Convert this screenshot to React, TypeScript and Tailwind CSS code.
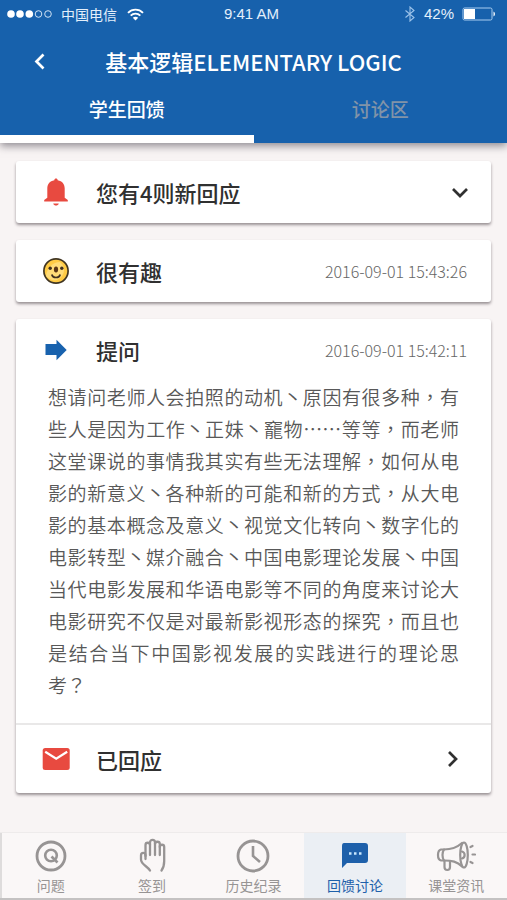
import type { ReactNode } from "react";

const feedback =
  "想请问老师人会拍照的动机丶原因有很多种，有些人是因为工作丶正妹丶竉物……等等，而老师这堂课说的事情我其实有些无法理解，如何从电影的新意义丶各种新的可能和新的方式，从大电影的基本概念及意义丶视觉文化转向丶数字化的电影转型丶媒介融合丶中国电影理论发展丶中国当代电影发展和华语电影等不同的角度来讨论大电影研究不仅是对最新影视形态的探究，而且也是结合当下中国影视发展的实践进行的理论思考？";

function StatusBar() {
  return (
    <div className="grid h-7 grid-cols-3 items-center pl-[7px] pr-[11px] text-[15px] text-[#e3effb]">
      <div className="flex items-center">
        <svg width="46" height="10" viewBox="0 0 46 10" fill="none" stroke="currentColor" aria-hidden="true">
          <circle cx="4" cy="5" r="3.8" fill="white" stroke="none" />
          <circle cx="13" cy="5" r="3.8" fill="white" stroke="none" />
          <circle cx="22.300" cy="5" r="3.8" fill="white" stroke="none" />
          <circle cx="31.500" cy="5" r="3.300" strokeWidth="0.900" />
          <circle cx="41" cy="5" r="3.300" strokeWidth="0.900" />
        </svg>
        <span className="ml-2 text-sm">中国电信</span>
        <svg className="ml-2.5" width="17" height="13" viewBox="0 0 17 13" fill="none" stroke="white" strokeWidth="1.900" aria-hidden="true">
          <path d="M1 4.800c4.200-4.200 10.800-4.200 15 0" />
          <path d="M3.700 7.600c2.700-2.700 6.900-2.700 9.600 0" />
          <path d="M8.500 12.600 5.800 9.800c1.500-1.500 3.900-1.500 5.400 0Z" fill="white" stroke="none" />
        </svg>
      </div>
      <span className="text-center font-['Liberation_Sans',sans-serif]">9:41 AM</span>
      <div className="flex items-center justify-end font-['Liberation_Sans',sans-serif]">
        <svg width="12" height="16" viewBox="0 0 12 16" fill="none" stroke="#9cc3ea" strokeWidth="1.100" aria-hidden="true">
          <path d="m1.500 4.500 8.500 7L6 15V1l4 3.500-8.500 7" />
        </svg>
        <span className="ml-2">42%</span>
        <svg className="ml-2" width="34" height="14" viewBox="0 0 34 14" fill="none" aria-hidden="true">
          <rect x="1" y="1" width="29" height="12" rx="1.500" stroke="#a9cdf0" />
          <rect x="2" y="2" width="11" height="10" fill="white" />
          <path d="M31.500 4.500c2 1 2 4 0 5Z" fill="white" />
        </svg>
      </div>
    </div>
  );
}

function Card({ children }: { children: ReactNode }) {
  return (
    <section className="rounded-[3px] bg-white shadow-[0_2px_3px_rgba(50,40,45,0.48)]">{children}</section>
  );
}

function Chevron({ d, label }: { d: string; label: string }) {
  return (
    <svg width="20" height="20" viewBox="0 0 20 20" fill="none" stroke="currentColor" strokeWidth="2.700" role="img" aria-label={label}>
      <path d={d} />
    </svg>
  );
}

function Bell() {
  return (
    <svg width="28" height="28" viewBox="0 0 28 28" fill="#e84a40" aria-hidden="true">
      <path d="M12.300 2.200c0-2.200 3.400-2.200 3.400 0 4.600.8 7 4 7 8.400v9.200l3.100 2.300v1.300H2.200v-1.300l3.100-2.300v-9.200c0-4.400 2.400-7.600 7-8.400Z" />
      <path d="M11.200 25.500h5.600c-.8 2.800-4.800 2.800-5.600 0Z" />
    </svg>
  );
}

function Smiley() {
  return (
    <svg width="28" height="28" viewBox="0 0 28 28" fill="none" aria-hidden="true">
      <circle cx="14" cy="14" r="12.100" fill="#ffcb45" stroke="#403522" strokeWidth="1.700" />
      <path d="M4 19c1-8 7-14 14-14 7 6 4 15-3 18-5 1-8-1-11-4Z" fill="#ffdc78" />
      <circle cx="8.200" cy="11.300" r="1.700" fill="#40301f" />
      <circle cx="19.800" cy="11.300" r="1.700" fill="#40301f" />
      <ellipse cx="14" cy="12.500" rx="2.100" ry="2.900" fill="#593516" />
      <path d="M9.800 17.500c.8 4 7.600 4 8.400 0" stroke="#40301f" strokeWidth="1.700" />
    </svg>
  );
}

function Arrow() {
  return (
    <svg width="28" height="28" viewBox="0 0 28 28" fill="#1862ae" aria-hidden="true">
      <path d="M3.500 8h11V3.800L24.700 14 14.500 24.200V19h-11Z" />
    </svg>
  );
}

function Mail() {
  return (
    <svg width="28" height="28" viewBox="0 0 28 28" fill="none" aria-hidden="true">
      <rect x="0.700" y="3" width="27" height="22" rx="2.500" fill="#e84a40" />
      <path d="m3.200 6.700 11 7 11-7" stroke="white" strokeWidth="2.200" />
    </svg>
  );
}

function NavItem({ label, active = false, children }: { label: string; active?: boolean; children: ReactNode }) {
  return (
    <a
      href="#"
      aria-current={active ? "page" : undefined}
      className={
        active
          ? "flex flex-col items-center bg-[#ebeff4] pt-1 text-[#1e60aa]"
          : "flex flex-col items-center pt-1 text-[#979494]"
      }
    >
      <svg width="40" height="38" viewBox="0 0 40 38" fill="none" stroke="currentColor" aria-hidden="true">
        {children}
      </svg>
      <span className="text-sm leading-5">{label}</span>
    </a>
  );
}

export default function App() {
  return (
    <div
      lang="zh-CN"
      className="flex min-h-screen flex-col bg-[#f8f4f4] font-['Noto_Sans_CJK_SC',sans-serif] text-[#303030]"
    >
      <header className="bg-[#1761ac] text-white shadow-[0_3px_8px_rgba(40,35,50,0.5)]">
        <StatusBar />
        <div className="relative flex h-[66px] items-center justify-center">
          <button aria-label="返回" className="absolute left-[30px]">
            <Chevron d="m13.500 3.500-7 7 7 7" label="返回" />
          </button>
          <h1 className="text-[22px] font-medium">基本逻辑ELEMENTARY LOGIC</h1>
        </div>
        <nav className="grid h-[49px] grid-cols-2 text-[19px] font-medium leading-6">
          <a href="#" aria-current="page" className="border-b-8 border-white pt-[3px] text-center">学生回馈</a>
          <a href="#" className="pt-[3px] text-center text-[#8193a8]">讨论区</a>
        </nav>
      </header>

      <main className="flex flex-1 flex-col gap-[17px] px-4 pb-[39px] pt-[18px]">
        <Card>
          <button className="flex h-[62px] w-full items-center pl-[26px] pr-[21px] text-left">
            <Bell />
            <span className="ml-[26px] flex-1 text-[22px] font-medium">您有4则新回应</span>
            <Chevron d="m3 7 7 7 7-7" label="展开" />
          </button>
        </Card>

        <Card>
          <div className="flex h-[62px] items-center pl-[26px] pr-6">
            <Smiley />
            <h2 className="ml-[26px] flex-1 text-[22px] font-medium">很有趣</h2>
            <time className="text-base font-light text-[#666]">2016-09-01 15:43:26</time>
          </div>
        </Card>

        <Card>
          <div className="flex h-[62px] items-center pl-[26px] pr-6">
            <Arrow />
            <h2 className="ml-[26px] flex-1 text-[22px] font-medium">提问</h2>
            <time className="text-base font-light text-[#666]">2016-09-01 15:42:11</time>
          </div>
          <p
            lang="zh-TW"
            className="px-8 pb-[22px] text-justify font-['Noto_Sans_CJK_TC',sans-serif] text-[19px] font-[350] leading-[32px] text-[#585858]"
          >
            {feedback}
          </p>
          <button className="flex h-[70px] w-full items-center border-t-2 border-[#e9e8e8] pl-[26px] pr-[29px] text-left">
            <Mail />
            <span className="ml-[26px] flex-1 text-[22px] font-medium">已回应</span>
            <Chevron d="m7 3 7 7-7 7" label="查看" />
          </button>
        </Card>
      </main>

      <nav className="grid h-[68px] grid-cols-5 border-b-2 border-t border-b-[#c4c2c2] border-t-[#eeebeb] bg-[#faf7f7] shadow-[inset_2px_0_0_#dedcdc]">
        <NavItem label="问题">
          <circle cx="20" cy="19" r="14" strokeWidth="2.800" />
          <circle cx="20" cy="18.500" r="5.800" strokeWidth="2.600" />
          <path d="m20.500 19.500 6 6" strokeWidth="2.600" />
        </NavItem>
        <NavItem label="签到">
          <g strokeWidth="2.300" strokeLinejoin="round" strokeLinecap="round">
            <path d="M18 33.500c-2-4-9-6-9-11v-4c0-3.500 4.500-3.500 4.500 0V22" />
            <path d="M13.500 19V8c0-3 4.500-3 4.500 0v10" />
            <path d="M18 8V5.500c0-3.500 5-3.500 5 0V18" />
            <path d="M23 7c0-3 4.800-3 4.800 0v11" />
            <path d="M27.800 10c0-3 4.400-3 4.400 0v14c0 4.500-.5 6.500-2.700 9.500" />
          </g>
        </NavItem>
        <NavItem label="历史纪录">
          <circle cx="20" cy="19" r="15" strokeWidth="2.800" />
          <path d="M20 9v10l7 6" strokeWidth="2.600" />
        </NavItem>
        <NavItem label="回馈讨论" active>
          <path d="M9 6h21q3 0 3 3v14q0 3-3 3H12l-5 5V9q0-3 2-3Z" fill="currentColor" stroke="none" />
          <path d="M14 16.500h2.500M19 16.500h2.500M24 16.500h2.500" stroke="#c9e7ff" strokeWidth="2.500" />
        </NavItem>
        <NavItem label="课堂资讯">
          <g strokeWidth="2.200" strokeLinecap="round" strokeLinejoin="round">
            <path d="M8 12.500H5c-4 1-4 10 0 11h3c-2-3-2-8 0-11Z" />
            <path d="M8 12.500c8 0 13-2 18-6.500M8 23.500c8 0 13 1 18 6" />
            <ellipse cx="28" cy="18" rx="3.800" ry="12.500" />
            <path d="M26 14.500c3.500 1 3.500 6 0 7" />
            <path d="M8.500 24v6c0 4 5.500 4 5.500 0v-6" />
            <path d="m34.500 10 2-1M36.500 17.500h2.500M34.500 25l2 1" />
          </g>
        </NavItem>
      </nav>
    </div>
  );
}
